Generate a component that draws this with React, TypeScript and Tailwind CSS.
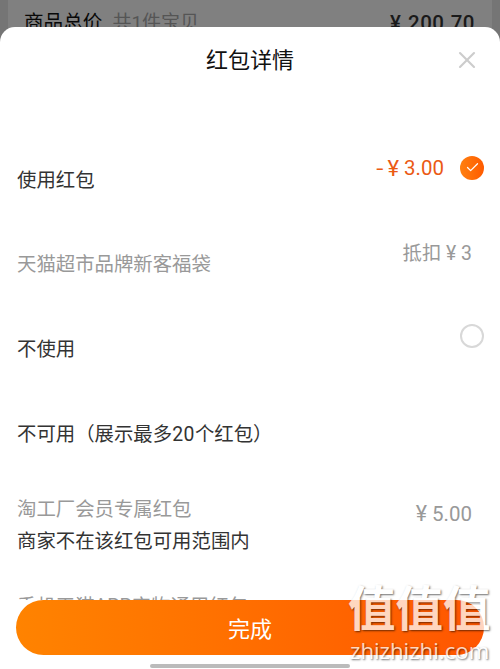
import { Check, X } from "lucide-react";

const zh = "font-['Roboto','Noto_Sans_CJK_SC',sans-serif]";

function OrderSummary() {
  return (
    <div className="absolute inset-x-0 top-0 h-16 bg-[#757575] px-2">
      <div className="flex h-full justify-between bg-[#808080] pr-[17px] pl-4 text-[19.6px] leading-[46px] whitespace-nowrap">
        <div className="text-[#080808]">
          商品总价
          <span className="ml-[10px] text-[19px] text-[#555]">共1件宝贝</span>
        </div>
        <div className="text-[20.5px] font-medium tracking-[0.5px] text-[#1a1a1a]">
          <span className="mr-px">¥</span> 200.70
        </div>
      </div>
    </div>
  );
}

function Watermark() {
  return (
    <div className="absolute top-[585px] left-[348px] w-[143px] text-white opacity-75 [text-shadow:1px_1px_2px_rgba(0,0,0,0.75)]">
      <div className="flex text-[47.5px] leading-[50px] font-bold">
        <span>值</span>
        <span>值</span>
        <span>值</span>
      </div>
      <div className="pl-[2px] font-['Open_Sans',sans-serif] text-[22.2px] leading-[31px] font-medium">
        zhizhizhi.com
      </div>
    </div>
  );
}

export default function App() {
  return (
    <div className={`relative h-[669px] w-[500px] overflow-hidden text-[19.4px] text-[#333] ${zh}`}>
      <OrderSummary />

      <div className="relative mt-[27px] flex h-[642px] flex-col rounded-t-[15px] bg-white">
        <header className="relative flex h-[66px] shrink-0 items-center justify-center text-[22px] text-[#111]">
          红包详情
          <button type="button" aria-label="关闭" className="absolute right-[19px] text-[#ccc]">
            <X size={28} strokeWidth={1.8} />
          </button>
        </header>

        <main className="h-[507px] overflow-hidden pt-[45px] pr-4 pl-[17px]">
          <div className="flex h-[85px] justify-between">
            <span className="leading-[85px]">使用红包</span>
            <span className="flex h-[60px] items-center text-[20.5px] text-[#eb5a14]">
              <span className="mr-[5px] scale-x-125">-</span>
              <span className="mr-[5px] text-[22px]">¥</span>
              <span className="pt-px">3.00</span>
              <span className="-mt-px ml-4 flex size-6 items-center justify-center rounded-full bg-linear-to-r from-[#ff8010] to-[#ff5a00] text-white">
                <Check size={15} strokeWidth={2} />
              </span>
            </span>
          </div>

          <div className="flex h-[84px] justify-between text-[#999]">
            <span className="leading-[84px]">天猫超市品牌新客福袋</span>
            <span className="mr-3 leading-[61px]">抵扣 ¥ 3</span>
          </div>

          <div className="flex h-[85px] justify-between">
            <span className="leading-[85px]">不使用</span>
            <span className="mt-[17px] size-6 rounded-full border-2 border-[#d8d8d8]" />
          </div>

          <div className="h-[85px] leading-[85px]">
            不可用（展示最多<span className="tracking-[0.5px]">20</span>个红包）
          </div>

          <div className="flex justify-between pt-[17px] text-[#999]">
            <div className="leading-8">
              <div>淘工厂会员专属红包</div>
              <div className="text-[#333]">商家不在该红包可用范围内</div>
            </div>
            <span className="mr-3 pt-1 text-[20.5px] leading-8">
              <span className="text-[21.5px]">¥</span> 5.00
            </span>
          </div>

          <div className="mt-[33px] leading-8 text-[#999]">手机天猫APP实物通用红包</div>
        </main>

        <button
          type="button"
          className="mx-4 h-[55px] shrink-0 rounded-full bg-linear-to-r from-[#ff8300] to-[#ff5500] pt-[3px] text-[22px] text-white"
        >
          完成
        </button>
        <div className="mx-auto mt-[9px] h-1 w-[200px] shrink-0 rounded-full bg-[#bbb]" />
      </div>

      <Watermark />
    </div>
  );
}
